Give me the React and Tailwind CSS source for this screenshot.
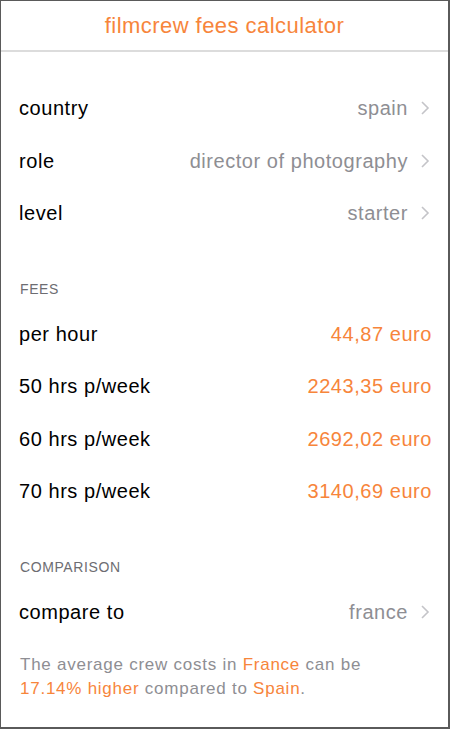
import React from "react";

const Chevron = () => (
  <svg width="10" height="16" viewBox="0 0 10 16" className="ml-[12px] shrink-0">
    <path d="M2 2 L8 8 L2 14" fill="none" stroke="#c4c4c8" strokeWidth="1.6" />
  </svg>
);

const NavRow = ({ label, value }) => (
  <div className="flex items-center justify-between h-[52.5px] pl-[18px] pr-[18px] text-[20px] tracking-[0.55px]">
    <span className="text-black">{label}</span>
    <span className="flex items-center text-[#8e8e93]">
      {value}
      <Chevron />
    </span>
  </div>
);

const FeeRow = ({ label, value }) => (
  <div className="flex items-center justify-between h-[52.5px] pl-[18px] pr-[16px] text-[20px] tracking-[0.55px]">
    <span className="text-black">{label}</span>
    <span className="text-[#f7853b]">{value}</span>
  </div>
);

const SectionLabel = ({ children }) => (
  <div className="h-[68px] flex items-end pb-[8px] pl-[19px] text-[14px] text-[#6d6d72] tracking-[0.6px]">
    {children}
  </div>
);

export default function App() {
  return (
    <div
      className="w-[450px] h-[729px] bg-white border-t border-l border-r-2 border-b-2 border-[#5a5a5a] overflow-hidden"
      style={{ fontFamily: '"Liberation Sans", Arial, sans-serif' }}
    >
      <div className="h-[51px] flex items-center justify-center border-b-2 border-[#dcdcdc]">
        <span className="text-[22px] tracking-[0.45px] text-[#f7853b] mt-[-1px]">filmcrew fees calculator</span>
      </div>
      <div className="pt-[30px]">
        <NavRow label="country" value="spain" />
        <NavRow label="role" value="director of photography" />
        <NavRow label="level" value="starter" />
      </div>
      <SectionLabel>FEES</SectionLabel>
      <FeeRow label="per hour" value="44,87 euro" />
      <FeeRow label="50 hrs p/week" value="2243,35 euro" />
      <FeeRow label="60 hrs p/week" value="2692,02 euro" />
      <FeeRow label="70 hrs p/week" value="3140,69 euro" />
      <SectionLabel>COMPARISON</SectionLabel>
      <NavRow label="compare to" value="france" />
      <div className="pl-[19px] pr-[10px] pt-[15px] text-[17px] leading-[24px] tracking-[0.75px] text-[#8e8e93]">
        The average crew costs in <span className="text-[#f7853b]">France</span> can be
        <br />
        <span className="text-[#f7853b]">17.14% higher</span> compared to{" "}
        <span className="text-[#f7853b]">Spain</span>.
      </div>
    </div>
  );
}
